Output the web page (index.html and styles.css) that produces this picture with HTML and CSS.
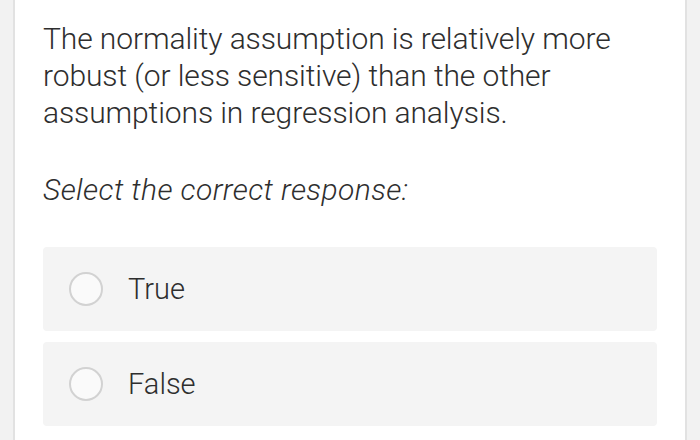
FILE: index.html
```html
<!DOCTYPE html>
<html>
<head>
<meta charset="utf-8">
<link rel="stylesheet" href="styles.css">
</head>
<body>
<div class="card">
  <p class="question">The normality assumption is relatively more robust (or less sensitive) than the other assumptions in regression analysis.</p>
  <p class="prompt">Select the correct response:</p>
  <div class="options">
    <label class="option"><span class="radio"></span><span class="label">True</span></label>
    <label class="option"><span class="radio"></span><span class="label">False</span></label>
  </div>
</div>
</body>
</html>
```
FILE: styles.css
```css
html, body {
  margin: 0;
  padding: 0;
  background: #f2f2f2;
}
body {
  font-family: Roboto, "Liberation Sans", sans-serif;
  font-weight: 300;
  color: #2e2e2e;
}
.card {
  margin: 0 13px;
  height: 440px;
  box-sizing: border-box;
  background: #fff;
  border-left: 2px solid #e2e2e2;
  border-right: 2px solid #e2e2e2;
  padding: 20px 28px 0;
}
.question {
  margin: 0;
  font-size: 30px;
  line-height: 37px;
  letter-spacing: -0.1px;
}
.prompt {
  margin: 40px 0 0;
  font-size: 30px;
  line-height: 37px;
  font-style: italic;
  letter-spacing: 0.4px;
}
.options {
  margin-top: 39px;
  display: flex;
  flex-direction: column;
  gap: 11px;
}
.option {
  display: flex;
  align-items: center;
  height: 84px;
  background: #f4f4f4;
  border-radius: 4px;
  padding-left: 26px;
}
.radio {
  width: 30px;
  height: 30px;
  border-radius: 50%;
  border: 2px solid #d2d2d2;
  background: #fafafa;
  flex: none;
}
.label {
  margin-left: 25px;
  font-size: 29px;
  line-height: 37px;
  color: #2e2e2e;
}
```
